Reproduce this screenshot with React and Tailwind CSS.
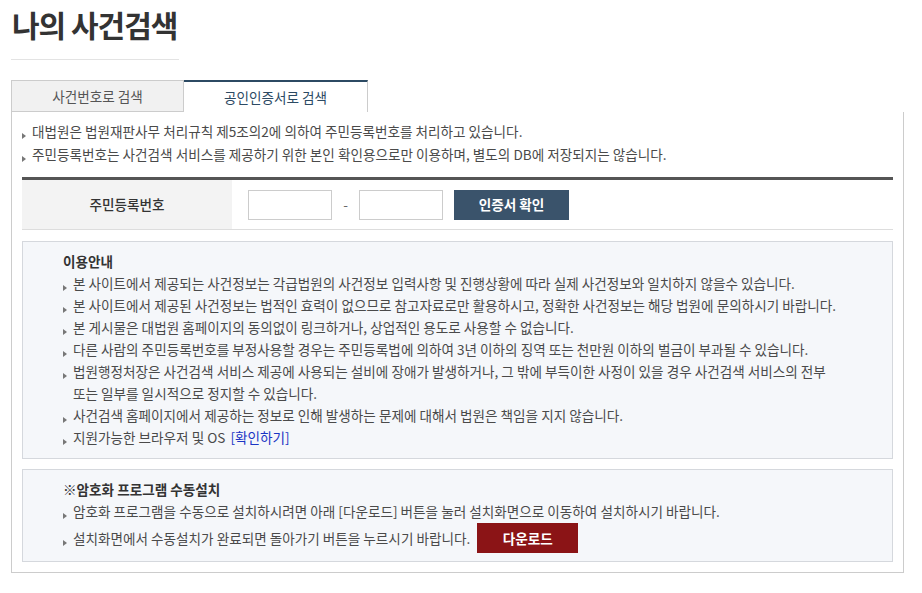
import React from 'react';

const font = { fontFamily: '"Noto Sans CJK KR", "Noto Sans", sans-serif' };

function Bullet() {
  return (
    <span className="inline-block w-[10px] shrink-0">
      <span className="inline-block border-y-[3px] border-l-[4px] border-y-transparent border-l-[#777] align-[-2px]"></span>
    </span>
  );
}

function Line({ children, className = '' }) {
  return (
    <li className={`flex ${className}`}>
      <Bullet />
      <span>{children}</span>
    </li>
  );
}

export default function App() {
  const notices = [
    '본 사이트에서 제공되는 사건정보는 각급법원의 사건정보 입력사항 및 진행상황에 따라 실제 사건정보와 일치하지 않을수 있습니다.',
    '본 사이트에서 제공된 사건정보는 법적인 효력이 없으므로 참고자료로만 활용하시고, 정확한 사건정보는 해당 법원에 문의하시기 바랍니다.',
    '본 게시물은 대법원 홈페이지의 동의없이 링크하거나, 상업적인 용도로 사용할 수 없습니다.',
    '다른 사람의 주민등록번호를 부정사용할 경우는 주민등록법에 의하여 3년 이하의 징역 또는 천만원 이하의 벌금이 부과될 수 있습니다.',
  ];

  return (
    <div className="bg-white min-h-[593px] px-[11px] pt-[4px] text-[13.6px] text-[#4a4a4a]" style={font}>
      {/* Title */}
      <h1 className="text-[30px] font-bold text-[#333] tracking-[-1px] leading-[40px] pl-[1px]">나의 사건검색</h1>
      <div className="w-[168px] h-px bg-[#e3e3e3] mt-[15px]"></div>

      {/* Tabs */}
      <div className="flex mt-[20px] h-[32px]">
        <button className="w-[173px] bg-[#f1f1f1] border border-[#ccc] text-[#555] text-[13.6px]">사건번호로 검색</button>
        <button className="w-[184px] bg-white border-t-2 border-t-[#2c4a63] border-r border-r-[#ccc] text-[#2c4a63] text-[13.6px]">공인인증서로 검색</button>
      </div>

      {/* Content */}
      <div className="w-[893px] border-x border-b border-[#ccc] px-[10px] pb-[10px]">
        <ul className="pt-[8px] leading-[23px]">
          <Line>대법원은 법원재판사무 처리규칙 제5조의2에 의하여 주민등록번호를 처리하고 있습니다.</Line>
          <Line>주민등록번호는 사건검색 서비스를 제공하기 위한 본인 확인용으로만 이용하며, 별도의 DB에 저장되지는 않습니다.</Line>
        </ul>

        {/* Form */}
        <div className="mt-[11px] border-t-[3px] border-t-[#555] border-b border-b-[#ddd] flex h-[53px]">
          <div className="w-[210px] bg-[#f3f3f3] flex items-center justify-center text-[#333] font-medium">주민등록번호</div>
          <div className="flex items-center pl-[16px]">
            <input className="w-[84px] h-[30px] border border-[#ccc] bg-white" />
            <span className="w-[27px] text-center text-[#666]">-</span>
            <input className="w-[84px] h-[30px] border border-[#ccc] bg-white" />
            <button className="ml-[11px] w-[115px] h-[30px] bg-[#3a536b] text-white font-bold">인증서 확인</button>
          </div>
        </div>

        {/* Info */}
        <div className="mt-[11px] border border-[#d5d8dd] bg-[#f5f7fa] pl-[40px] pt-[8px] pb-[10px] leading-[22px]">
          <p className="font-bold text-[#333]">이용안내</p>
          <ul>
            {notices.map((n) => (
              <Line key={n}>{n}</Line>
            ))}
            <Line>
              법원행정처장은 사건검색 서비스 제공에 사용되는 설비에 장애가 발생하거나, 그 밖에 부득이한 사정이 있을 경우 사건검색 서비스의 전부
              <br />
              또는 일부를 일시적으로 정지할 수 있습니다.
            </Line>
            <Line>사건검색 홈페이지에서 제공하는 정보로 인해 발생하는 문제에 대해서 법원은 책임을 지지 않습니다.</Line>
            <Line>
              지원가능한 브라우저 및 OS <a href="#" className="text-[#1b35c4] ml-[2px]">[확인하기]</a>
            </Line>
          </ul>
        </div>

        {/* Manual install */}
        <div className="mt-[10px] border border-[#d5d8dd] bg-[#f5f7fa] pl-[40px] pt-[8px] pb-[8px] leading-[22px]">
          <p className="font-bold text-[#333]">※암호화 프로그램 수동설치</p>
          <ul>
            <Line>암호화 프로그램을 수동으로 설치하시려면 아래 [다운로드] 버튼을 눌러 설치화면으로 이동하여 설치하시기 바랍니다.</Line>
            <li className="flex items-center mt-[1px]">
              <Bullet />
              <span>설치화면에서 수동설치가 완료되면 돌아가기 버튼을 누르시기 바랍니다.</span>
              <button className="ml-[7px] w-[101px] h-[30px] bg-[#8b1416] text-white font-bold">다운로드</button>
            </li>
          </ul>
        </div>
      </div>
    </div>
  );
}
